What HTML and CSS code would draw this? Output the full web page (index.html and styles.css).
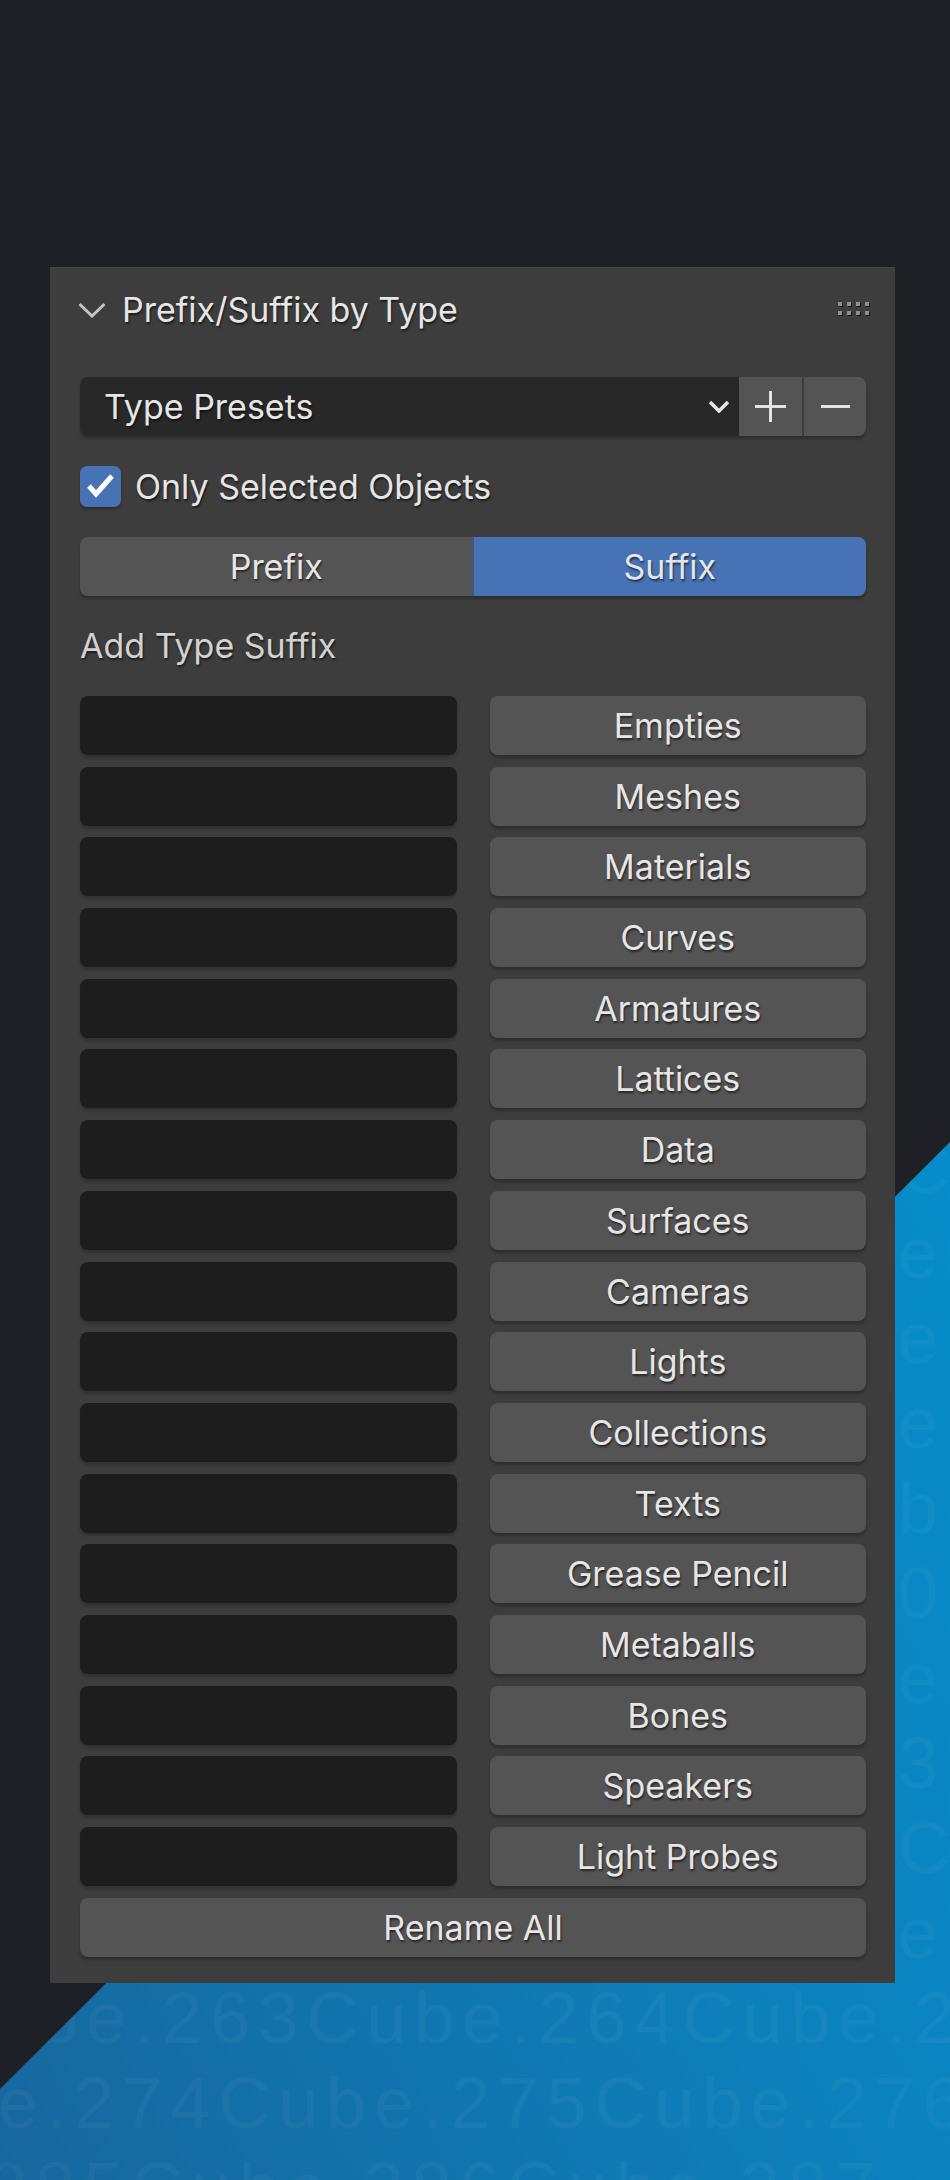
FILE: index.html
```html
<!DOCTYPE html>
<html lang="en">
<head>
  <meta charset="UTF-8">
  <title>Prefix/Suffix by Type</title>
  <link rel="stylesheet" href="styles.css">
</head>
<body>

<div class="stage">
  <div class="viewport">
    <div class="cubes">
      <div class="side">Cu</div>
      <div class="side">e.</div>
      <div class="side">e.</div>
      <div class="side">e.</div>
      <div class="side">be</div>
      <div class="side">08</div>
      <div class="side">e.</div>
      <div class="side">3C</div>
      <div class="side">Cu</div>
      <div class="side">e.</div>
      <div class="line-a">Cube.263Cube.264Cube.265</div>
      <div class="line-b">Cube.274Cube.275Cube.276</div>
      <div class="line-c">Cube.285Cube.286Cube.287</div>
    </div>
  </div>

  <section class="panel">
    <header class="panel-header">
      <svg class="chevron" viewBox="0 0 28 16"><polyline points="1.5,2 14,14 26.5,2"/></svg>
      <span class="panel-title">Prefix/Suffix by Type</span>
      <svg class="grip" viewBox="0 0 34 16">
        <g fill="#141414">
          <rect x="1" y="1" width="4" height="4"/><rect x="10" y="1" width="4" height="4"/>
          <rect x="19" y="1" width="4" height="4"/><rect x="28" y="1" width="4" height="4"/>
          <rect x="1" y="10" width="4" height="4"/><rect x="10" y="10" width="4" height="4"/>
          <rect x="19" y="10" width="4" height="4"/><rect x="28" y="10" width="4" height="4"/>
        </g>
        <g fill="#8f8f8f">
          <rect x="0" y="0" width="4" height="4"/><rect x="9" y="0" width="4" height="4"/>
          <rect x="18" y="0" width="4" height="4"/><rect x="27" y="0" width="4" height="4"/>
          <rect x="0" y="9" width="4" height="4"/><rect x="9" y="9" width="4" height="4"/>
          <rect x="18" y="9" width="4" height="4"/><rect x="27" y="9" width="4" height="4"/>
        </g>
      </svg>
    </header>

    <div class="panel-body">
      <div class="preset-row">
        <div class="preset-menu">
          <span>Type Presets</span>
          <svg class="menu-arrow" viewBox="0 0 22 13"><polyline points="2,2 11,11 20,2"/></svg>
        </div>
        <button class="preset-btn">
          <svg viewBox="0 0 32 32"><line x1="16" y1="0" x2="16" y2="32"/><line x1="0" y1="16" x2="32" y2="16"/></svg>
        </button>
        <button class="preset-btn last">
          <svg viewBox="0 0 32 32"><line x1="1" y1="16" x2="31" y2="16"/></svg>
        </button>
      </div>

      <label class="check-row">
        <span class="checkbox">
          <svg viewBox="0 0 41 41"><polyline points="9,20 16,28 32,10"/></svg>
        </span>
        Only Selected Objects
      </label>

      <div class="toggle">
        <button class="toggle-btn">Prefix</button>
        <button class="toggle-btn active">Suffix</button>
      </div>

      <div class="section-label">Add Type Suffix</div>

      <div class="type-grid">
        <div class="field"></div><button class="btn">Empties</button>
        <div class="field"></div><button class="btn">Meshes</button>
        <div class="field"></div><button class="btn">Materials</button>
        <div class="field"></div><button class="btn">Curves</button>
        <div class="field"></div><button class="btn">Armatures</button>
        <div class="field"></div><button class="btn">Lattices</button>
        <div class="field"></div><button class="btn">Data</button>
        <div class="field"></div><button class="btn">Surfaces</button>
        <div class="field"></div><button class="btn">Cameras</button>
        <div class="field"></div><button class="btn">Lights</button>
        <div class="field"></div><button class="btn">Collections</button>
        <div class="field"></div><button class="btn">Texts</button>
        <div class="field"></div><button class="btn">Grease Pencil</button>
        <div class="field"></div><button class="btn">Metaballs</button>
        <div class="field"></div><button class="btn">Bones</button>
        <div class="field"></div><button class="btn">Speakers</button>
        <div class="field"></div><button class="btn">Light Probes</button>
      </div>

      <button class="btn rename">Rename All</button>
    </div>
  </section>
</div>

</body>
</html>
```

FILE: styles.css
```css
* {
  box-sizing: border-box;
}

body {
  margin: 0;
  background: #1f2025;
  font-family: Inter, "DejaVu Sans", sans-serif;
}

.stage {
  display: grid;
  width: 950px;
  height: 2180px;
  overflow: hidden;
}

/* blue 3d viewport corner behind the panel */
.viewport {
  grid-area: 1 / 1;
  overflow: hidden;
  background: linear-gradient(60deg, #17679d 0%, #0b84c0 45%, #0097d3 100%);
  clip-path: polygon(100% 1142px, 100% 100%, 0 100%, 0 2089px);
}

.cubes {
  padding-top: 1126px;
  font-family: "Liberation Sans", Arial, sans-serif;
  font-size: 72px;
  line-height: 85px;
  letter-spacing: 8px;
  white-space: nowrap;
  color: rgba(255, 255, 255, 0.04);
}

.cubes .side {
  padding-left: 898px;
}

.cubes .line-a {
  margin-left: -70px;
}

.cubes .line-b {
  margin-left: -158px;
}

.cubes .line-c {
  margin-left: -245px;
}

.panel {
  grid-area: 1 / 1;
  align-self: start;
  justify-self: start;
  z-index: 1;
  width: 845px;
  margin: 267px 0 0 50px;
  background: #3d3d3d;
  border-top: 1px solid #474747;
  color: #e6e6e6;
  font-size: 34px;
  text-shadow: 1px 2px 2px rgba(0, 0, 0, 0.55);
}

.panel-header {
  display: flex;
  align-items: center;
  height: 83px;
  padding: 0 23px 0 28px;
}

.chevron {
  width: 28px;
  height: 16px;
  margin-right: 16px;
  fill: none;
  stroke: #c4c4c4;
  stroke-width: 3;
}

.panel-title {
  flex: 1;
  font-size: 34px;
}

.grip {
  width: 34px;
  height: 16px;
}

.panel-body {
  display: flex;
  flex-direction: column;
  padding: 26px 29px 26px 30px;
}

button {
  font: inherit;
  color: inherit;
  text-shadow: inherit;
  border: none;
  padding: 0;
  cursor: pointer;
}

.preset-row {
  display: flex;
  height: 59px;
  box-shadow: 0 3px 3px rgba(0, 0, 0, 0.25);
  border-radius: 8px;
}

.preset-menu {
  flex: 1;
  display: flex;
  align-items: center;
  justify-content: space-between;
  padding: 0 9px 0 24px;
  background: #282828;
  border-radius: 8px 0 0 8px;
}

.menu-arrow {
  width: 22px;
  height: 13px;
  fill: none;
  stroke: #e6e6e6;
  stroke-width: 3.5;
}

.preset-btn {
  width: 63px;
  display: flex;
  align-items: center;
  justify-content: center;
  background: #545454;
}

.preset-btn.last {
  width: 62px;
  margin-left: 2px;
  border-radius: 0 8px 8px 0;
}

.preset-btn svg {
  width: 31px;
  height: 31px;
  stroke: #e6e6e6;
  stroke-width: 3;
}

.check-row {
  display: flex;
  align-items: center;
  gap: 14px;
  height: 41px;
  margin-top: 30px;
}

.checkbox {
  width: 41px;
  height: 41px;
  border-radius: 7px;
  background: #4772b3;
  box-shadow: 0 2px 3px rgba(0, 0, 0, 0.3);
}

.checkbox svg {
  display: block;
  width: 41px;
  height: 41px;
  fill: none;
  stroke: #ffffff;
  stroke-width: 5;
}

.toggle {
  display: flex;
  height: 59px;
  margin-top: 30px;
  border-radius: 8px;
  box-shadow: 0 3px 3px rgba(0, 0, 0, 0.25);
}

.toggle-btn {
  flex: 1;
  background: #545454;
  border-radius: 8px 0 0 8px;
}

.toggle-btn.active {
  background: #4772b3;
  border-radius: 0 8px 8px 0;
  border-left: 1px solid #3a5a8c;
}

.section-label {
  height: 59px;
  line-height: 59px;
  margin-top: 20px;
  color: #d2d2d2;
}

.type-grid {
  display: grid;
  grid-template-columns: 1fr 1fr;
  grid-auto-rows: 59px;
  column-gap: 33px;
  row-gap: 11.7px;
  margin-top: 21px;
}

.field {
  background: #1d1d1d;
  border-radius: 8px;
  box-shadow: 0 3px 3px rgba(0, 0, 0, 0.2);
}

.btn {
  background: #545454;
  border-radius: 8px;
  box-shadow: 0 3px 3px rgba(0, 0, 0, 0.25);
}

.btn.rename {
  height: 59px;
  margin-top: 12px;
}
```
